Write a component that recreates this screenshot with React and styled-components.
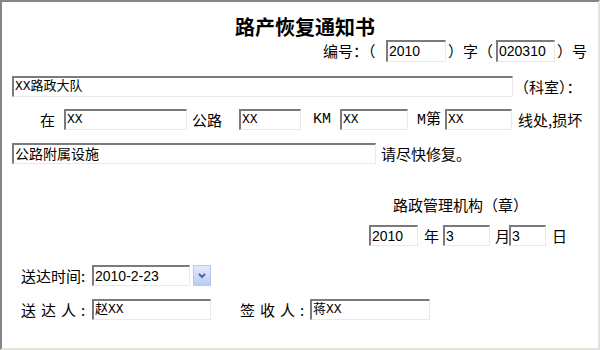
import React from 'react';
import styled, { createGlobalStyle } from 'styled-components';

const GlobalStyle = createGlobalStyle`
  html, body {
    margin: 0;
    padding: 0;
    background: #ffffff;
  }
  body {
    font-family: "Noto Sans CJK SC", "Liberation Sans", sans-serif;
    color: #000000;
  }
`;

const Frame = styled.div`
  width: 600px;
  height: 350px;
  box-sizing: border-box;
  border-style: solid;
  border-width: 2px;
  border-color: #858585 #e4e3dc #e4e3dc #858585;
  display: flex;
  flex-direction: column;
  background: #ffffff;
  overflow: hidden;
`;

const Title = styled.div`
  margin-top: 13px;
  height: 24px;
  line-height: 24px;
  padding-left: 10px;
  text-align: center;
  font-size: 20px;
  font-weight: bold;
`;

const Row = styled.div`
  display: flex;
  align-items: center;
  margin-top: ${(p) => p.$top || 0}px;
  padding-left: ${(p) => p.$left || 0}px;
  height: ${(p) => p.$h || 21}px;
`;

const Text = styled.span`
  flex: none;
  display: inline-block;
  font-size: 15px;
  line-height: 20px;
  white-space: pre;
  margin-left: ${(p) => p.$ml || 0}px;
  width: ${(p) => (p.$w ? `${p.$w}px` : 'auto')};
  letter-spacing: ${(p) => p.$ls || 0}px;
  font-family: ${(p) =>
    p.$latin ? '"Liberation Mono", monospace' : '"Noto Sans CJK SC", "Liberation Sans", sans-serif'};
`;

const Field = styled.div`
  flex: none;
  box-sizing: border-box;
  width: ${(p) => p.$w}px;
  height: ${(p) => p.$h || 21}px;
  margin-left: ${(p) => p.$ml || 0}px;
  border-style: solid;
  border-width: 2px 1px 1px 2px;
  border-color: #7b7b7b #ebe9e1 #ebe9e1 #7b7b7b;
  background: #ffffff;
  padding-left: 1px;
  font-size: ${(p) => (p.$mono ? 13 : 14)}px;
  line-height: ${(p) => (p.$h || 21) - 3}px;
  white-space: nowrap;
  overflow: hidden;
  font-family: ${(p) =>
    p.$mono
      ? '"Liberation Mono", "Noto Sans CJK SC", monospace'
      : '"Liberation Sans", "Noto Sans CJK SC", sans-serif'};
`;

const DropButton = styled.div`
  flex: none;
  box-sizing: border-box;
  width: 18px;
  height: 21px;
  margin-left: 3px;
  border: 1px solid #b7c8ef;
  background: linear-gradient(#e3ebfe, #b9cbf7);
  display: flex;
  align-items: center;
  justify-content: center;
`;

function Chevron() {
  return (
    <svg width="8" height="6" viewBox="0 0 8 6">
      <path d="M1 1 L4 4 L7 1" fill="none" stroke="#4a5e8c" strokeWidth="1.8" />
    </svg>
  );
}

export default function App() {
  return (
    <>
      <GlobalStyle />
      <Frame>
        <Title>路产恢复通知书</Title>

        <Row $top={1} $left={321} $h={22}>
          <Text $w={63}>编号：（</Text>
          <Field $w={60} $h={22}>2010</Field>
          <Text $ml={2} $w={48}>）字（</Text>
          <Field $w={59} $h={22}>020310</Field>
          <Text $ml={2}>）号</Text>
        </Row>

        <Row $top={14} $left={10}>
          <Field $w={501} $mono>XX路政大队</Field>
          <Text $ml={1}>（科室）：</Text>
        </Row>

        <Row $top={12} $left={38}>
          <Text $w={24}>在</Text>
          <Field $w={123} $mono>XX</Field>
          <Text $ml={5} $w={47}>公路</Text>
          <Field $w={62} $mono>XX</Field>
          <Text $ml={12} $w={27} $latin>KM</Text>
          <Field $w={68} $mono>XX</Field>
          <Text $ml={9} $w={28}>
            <Text $latin>M</Text>第
          </Text>
          <Field $w={67} $mono>XX</Field>
          <Text $ml={6}>线处,损坏</Text>
        </Row>

        <Row $top={13} $left={10}>
          <Field $w={364}>公路附属设施</Field>
          <Text $ml={5}>请尽快修复。</Text>
        </Row>

        <Row $top={31} $left={391} $h={20}>
          <Text>路政管理机构（章）</Text>
        </Row>

        <Row $top={10} $left={367}>
          <Field $w={49}>2010</Field>
          <Text $ml={6} $w={19}>年</Text>
          <Field $w={47}>3</Field>
          <Text $ml={5} $w={14}>月</Text>
          <Field $w={37}>3</Field>
          <Text $ml={6}>日</Text>
        </Row>

        <Row $top={19} $left={19}>
          <Text $w={71}>送达时间:</Text>
          <Field $w={98}>2010-2-23</Field>
          <DropButton>
            <Chevron />
          </DropButton>
        </Row>

        <Row $top={13} $left={19}>
          <Text $w={71} $ls={5}>送达人:</Text>
          <Field $w={119} $mono>赵XX</Field>
          <Text $ml={29} $w={70} $ls={5}>签收人:</Text>
          <Field $w={120} $mono>蒋XX</Field>
        </Row>
      </Frame>
    </>
  );
}
